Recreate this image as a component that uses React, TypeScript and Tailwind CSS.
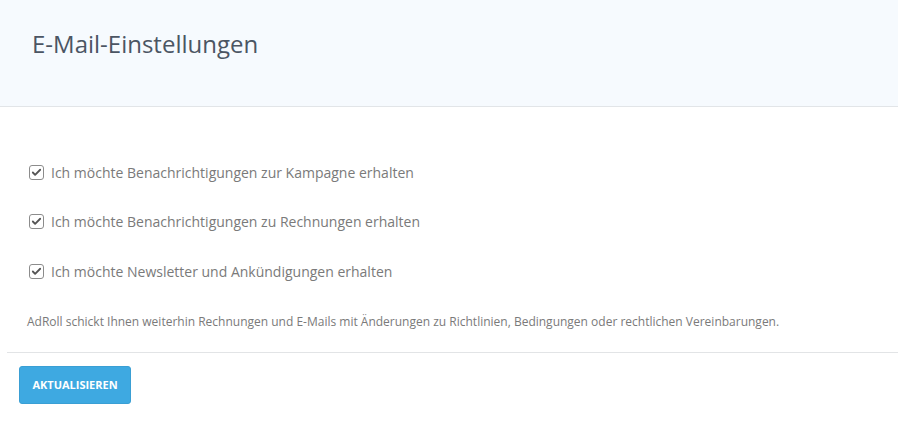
import { Check } from "lucide-react";

const OPTIONS = [
  "Ich möchte Benachrichtigungen zur Kampagne erhalten",
  "Ich möchte Benachrichtigungen zu Rechnungen erhalten",
  "Ich möchte Newsletter und Ankündigungen erhalten",
];

function CheckRow({ label }: { label: string }) {
  return (
    <label className="flex items-center gap-[7px] h-[20px]">
      <span className="w-[15px] h-[15px] rounded-[3px] border border-[#8c8c8c] bg-white flex items-center justify-center">
        <Check className="w-[11px] h-[11px] text-[#555]" strokeWidth={4} />
      </span>
      <span className="text-[14px] text-[#7a7a7a]">{label}</span>
    </label>
  );
}

export default function App() {
  return (
    <div className="w-[898px] h-[421px] bg-white font-['Open_Sans',sans-serif]">
      <div className="h-[107px] bg-[#f6fafe] border-b border-[#e2e5e8] pl-[32px] pt-[28px]">
        <h1 className="text-[24px] leading-[32px] text-[#4b5563]">E-Mail-Einstellungen</h1>
      </div>
      <div className="pl-[29px] pt-[55px] flex flex-col gap-[29.5px]">
        {OPTIONS.map((o) => (
          <CheckRow key={o} label={o} />
        ))}
      </div>
      <p className="pl-[27px] pt-[33px] text-[12px] leading-[16px] text-[#7a7a7a]">
        AdRoll schickt Ihnen weiterhin Rechnungen und E-Mails mit Änderungen zu Richtlinien, Bedingungen oder rechtlichen Vereinbarungen.
      </p>
      <div className="ml-[7px] mt-[22px] border-t border-[#e2e4e6]" />
      <div className="pl-[19px] pt-[13px]">
        <button className="w-[112px] h-[38px] rounded-[3px] bg-[#3ea9e1] border border-[#3a9fd4] text-white text-[11px] font-bold">
          AKTUALISIEREN
        </button>
      </div>
    </div>
  );
}
